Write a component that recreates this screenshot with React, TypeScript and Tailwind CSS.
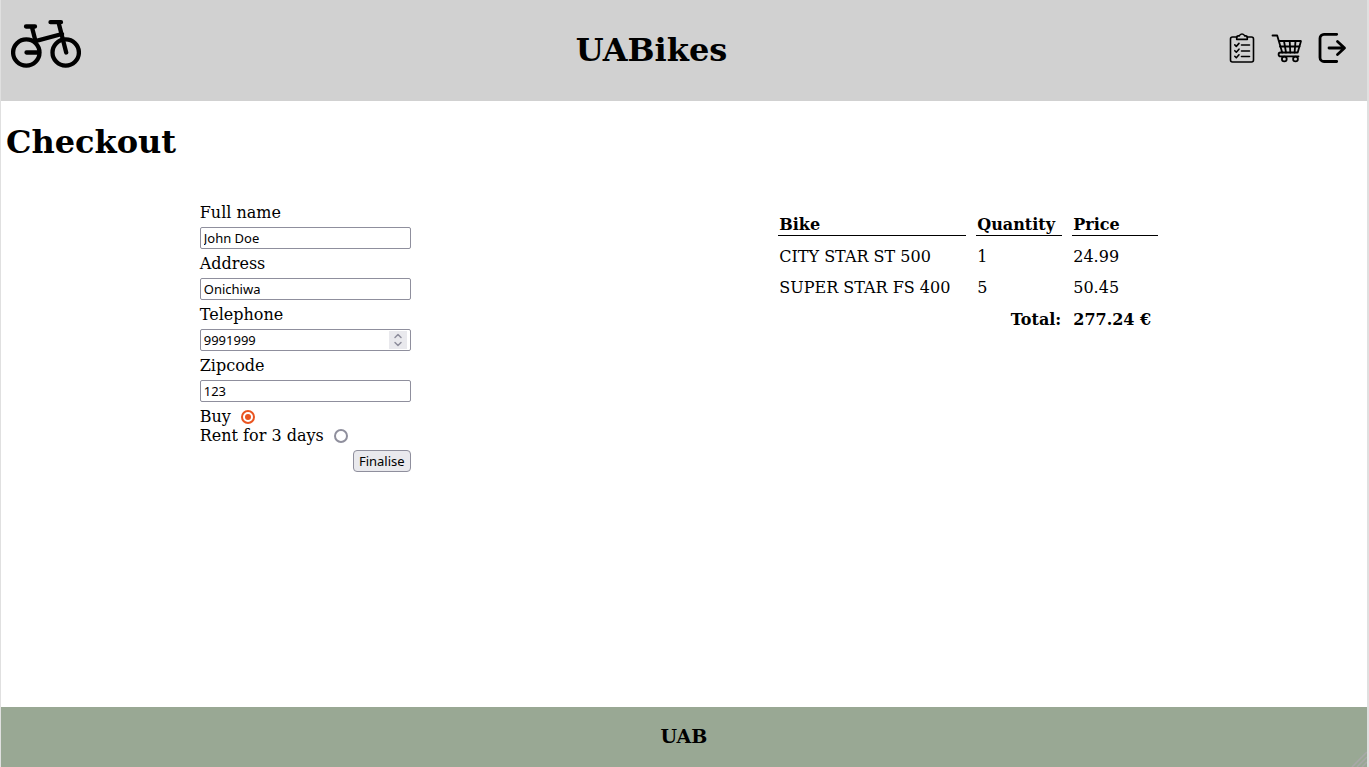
import { useState } from "react";
import type { InputHTMLAttributes } from "react";

function BikeLogo() {
  return (
    <svg className="h-12 w-[70px]" viewBox="0 0 70 48" fill="none" stroke="#000" strokeWidth="4.3" strokeLinecap="round">
      <circle cx="15.3" cy="32.5" r="13.2" />
      <circle cx="54.7" cy="32.5" r="13.2" />
      <path d="M15.500 32.500H28M15 6.500h9M20.800 6.500l3.700 14.500 26.500-7M39.500 2.200h10.500M47.500 2.200l7.700 30.300" />
    </svg>
  );
}

function OrdersIcon() {
  return (
    <svg className="h-8 w-8" viewBox="0 0 32 32" fill="none" stroke="#000" strokeWidth="1.600" strokeLinecap="round" strokeLinejoin="round">
      <path d="M11 5H6.500a2 2 0 0 0-2 2V28a2 2 0 0 0 2 2h19a2 2 0 0 0 2-2V7a2 2 0 0 0-2-2H21" />
      <path d="M10.700 7.400V5.200a1.500 1.500 0 0 1 1.500-1.300h1.200a2.700 2.700 0 0 1 5.200 0h1.200a1.500 1.500 0 0 1 1.500 1.300v2.200z" />
      <path d="M15.500 13h8M15.500 19h8M15.500 24.500h8M8.800 12.900l1.500 1.500 2.700-3M8.800 18.700l1.500 1.500 2.700-3M8.800 24.300l1.500 1.500 2.700-3" />
    </svg>
  );
}

function CartIcon() {
  return (
    <svg className="h-8 w-8" viewBox="0 0 32 32" fill="none" stroke="#000" strokeWidth="1.800" strokeLinecap="round" strokeLinejoin="round">
      <path d="M1.500 3.500h4.700l5 17h15.500l3.300-11.500H8" />
      <path d="M9 14.500h19.500M13 9l2 11.500M18.700 9l.6 11.500M24.500 9l-.9 11.500" />
      <path d="M11.200 20.500H9.500a1.800 1.800 0 0 0 0 3.800H27.500" />
      <circle cx="13.300" cy="27" r="2.400" />
      <circle cx="24.500" cy="27" r="2.400" />
    </svg>
  );
}

function LogoutIcon() {
  return (
    <svg className="h-8 w-8" viewBox="0 0 32 32" fill="none" stroke="#000" strokeWidth="2.800" strokeLinecap="round" strokeLinejoin="round">
      <path d="M20.700 2.300H8a4 4 0 0 0-4 4V25.500a4 4 0 0 0 4 4H20.700" />
      <path d="M13 16H28.300M21.500 9.500l7 6.500-7 6.500" />
    </svg>
  );
}

type FieldProps = InputHTMLAttributes<HTMLInputElement> & { id: string; label: string };

function Field({ id, label, type = "text", ...rest }: FieldProps) {
  return (
    <div className="flex flex-col gap-[5px]">
      <label htmlFor={id} className="self-start">{label}</label>
      <div className="relative">
        <input
          id={id}
          name={id}
          type={type}
          className="block h-[22px] w-full appearance-none rounded-xs border border-[#8f8f9d] bg-white px-[3px] font-['Noto_Sans',sans-serif] text-[13px] [&::-webkit-inner-spin-button]:appearance-none"
          {...rest}
        />
        {type === "number" && (
          <svg
            aria-hidden="true"
            className="pointer-events-none absolute top-0.5 right-1 h-[18px] w-[18px] bg-[#e9e9ed]"
            viewBox="0 0 18 18"
            fill="none"
            stroke="#8f8f9d"
            strokeWidth="1.5"
            strokeLinecap="round"
            strokeLinejoin="round"
          >
            <path d="M6 6.500l3-3 3 3M6 11.500l3 3 3-3" />
          </svg>
        )}
      </div>
    </div>
  );
}

type Mode = "buy" | "rent";

function ModeOption({ value, label, mode, onSelect }: { value: Mode; label: string; mode: Mode; onSelect: (m: Mode) => void }) {
  return (
    <div className="flex h-[19px] items-center gap-2.5">
      <label htmlFor={value}>{label}</label>
      <input
        id={value}
        type="radio"
        name="mode"
        value={value}
        checked={mode === value}
        onChange={() => onSelect(value)}
        className="h-3.5 w-3.5 appearance-none rounded-full border-2 border-[#8f8f9d] bg-white bg-clip-content p-0.5 checked:border-[#e95420] checked:bg-[#e95420]"
      />
    </div>
  );
}

const items = [
  { bike: "CITY STAR ST 500", quantity: 1, price: "24.99" },
  { bike: "SUPER STAR FS 400", quantity: 5, price: "50.45" },
];

export default function App() {
  const [mode, setMode] = useState<Mode>("buy");

  return (
    <div className="flex min-h-screen flex-col border-r-2 border-l border-[#e0e0e0] bg-white font-['DejaVu_Serif',serif] text-base leading-[19px] text-black">
      <header className="flex h-[101px] items-start justify-between bg-[#d1d1d1]">
        <a href="#home" aria-label="Home" className="px-2.5 pt-5">
          <BikeLogo />
        </a>
        <h1 className="self-center text-[32px] leading-[37px] font-bold">UABikes</h1>
        <nav className="flex gap-[13px] pt-8 pr-[19px] pl-[14px]">
          <a href="#orders" aria-label="Orders"><OrdersIcon /></a>
          <a href="#cart" aria-label="Cart"><CartIcon /></a>
          <a href="#logout" aria-label="Log out"><LogoutIcon /></a>
        </nav>
      </header>

      <main className="grow">
        <h2 className="px-[5px] pt-[23px] text-[32px] leading-[37px] font-bold">Checkout</h2>
        <div className="mt-[42px] flex items-start justify-around px-5">
          <form className="flex w-[211px] flex-col gap-[5px]" onSubmit={(e) => e.preventDefault()}>
            <Field id="name" label="Full name" defaultValue="John Doe" />
            <Field id="address" label="Address" defaultValue="Onichiwa" />
            <Field id="telephone" label="Telephone" type="number" defaultValue={9991999} />
            <Field id="zipcode" label="Zipcode" defaultValue="123" />
            <div>
              <ModeOption value="buy" label="Buy" mode={mode} onSelect={setMode} />
              <ModeOption value="rent" label="Rent for 3 days" mode={mode} onSelect={setMode} />
            </div>
            <button
              type="submit"
              className="flex h-[22px] w-[58px] items-center justify-center self-end rounded-sm border border-[#8f8f9d] bg-[#e9e9ed] font-['Noto_Sans',sans-serif] text-[13px]"
            >
              Finalise
            </button>
          </form>

          <table className="mt-px w-[400px] table-fixed border-separate border-spacing-2.5 text-left">
            <thead>
              <tr>
                <th className="w-[188px] border-b border-black p-px">Bike</th>
                <th className="w-[86px] border-b border-black p-px">Quantity</th>
                <th className="w-[86px] border-b border-black p-px">Price</th>
              </tr>
            </thead>
            <tbody>
              {items.map((item) => (
                <tr key={item.bike}>
                  <td className="p-px">{item.bike}</td>
                  <td className="p-px">{item.quantity}</td>
                  <td className="p-px">{item.price}</td>
                </tr>
              ))}
            </tbody>
            <tfoot>
              <tr>
                <th colSpan={2} className="px-px pt-0.5 pb-px text-right">Total:</th>
                <td className="px-px pt-0.5 pb-px font-bold">277.24 €</td>
              </tr>
            </tfoot>
          </table>
        </div>
      </main>

      <footer className="relative flex h-[60px] items-center justify-center bg-[#99a894] pb-0.5">
        <p className="text-[19px] leading-[22px] font-bold">UAB</p>
        <svg aria-hidden="true" className="absolute right-0 bottom-0 h-4 w-4" viewBox="0 0 16 16" stroke="#a8a8a8" strokeWidth="1.500">
          <path d="M1 16 16 1M6 16 16 6M11 16l5-5" />
        </svg>
      </footer>
    </div>
  );
}
